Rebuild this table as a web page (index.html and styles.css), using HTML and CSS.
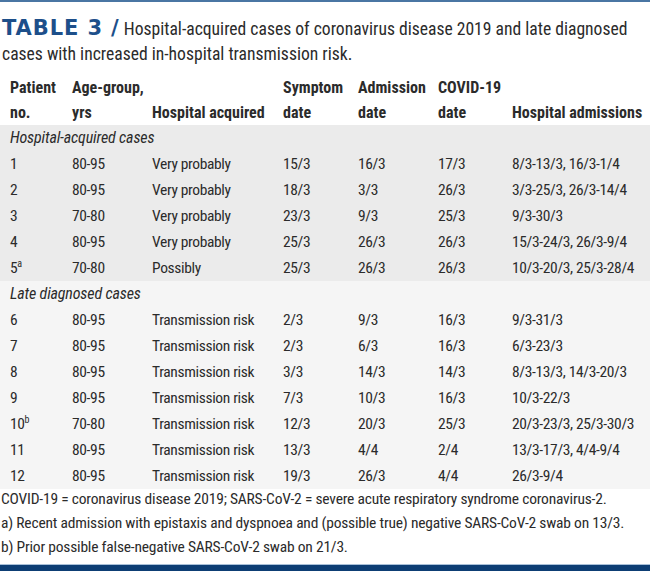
FILE: index.html
```html
<!DOCTYPE html>
<html lang="en">
<head>
<meta charset="utf-8">
<title>Table 3</title>
<link rel="stylesheet" href="styles.css">
</head>
<body>
<div class="page">
  <div class="topline"></div>
  <h1 class="title"><span class="label">TABLE 3 /</span> Hospital-acquired cases of coronavirus disease 2019 and late diagnosed cases with increased in-hospital transmission risk.</h1>
  <table class="data">
    <colgroup>
      <col class="c1"><col class="c2"><col class="c3"><col class="c4"><col class="c5"><col class="c6"><col class="c7">
    </colgroup>
    <thead>
      <tr><th>Patient<br>no.</th><th>Age-group,<br>yrs</th><th>Hospital acquired</th><th>Symptom<br>date</th><th>Admission<br>date</th><th>COVID-19<br>date</th><th>Hospital admissions</th></tr>
    </thead>
    <tbody class="band1">
      <tr class="section"><td colspan="7">Hospital-acquired cases</td></tr>
      <tr><td>1</td><td>80-95</td><td>Very probably</td><td>15/3</td><td>16/3</td><td>17/3</td><td>8/3-13/3, 16/3-1/4</td></tr>
      <tr><td>2</td><td>80-95</td><td>Very probably</td><td>18/3</td><td>3/3</td><td>26/3</td><td>3/3-25/3, 26/3-14/4</td></tr>
      <tr><td>3</td><td>70-80</td><td>Very probably</td><td>23/3</td><td>9/3</td><td>25/3</td><td>9/3-30/3</td></tr>
      <tr><td>4</td><td>80-95</td><td>Very probably</td><td>25/3</td><td>26/3</td><td>26/3</td><td>15/3-24/3, 26/3-9/4</td></tr>
      <tr><td>5<sup>a</sup></td><td>70-80</td><td>Possibly</td><td>25/3</td><td>26/3</td><td>26/3</td><td>10/3-20/3, 25/3-28/4</td></tr>
    </tbody>
    <tbody class="band2">
      <tr class="section"><td colspan="7">Late diagnosed cases</td></tr>
      <tr><td>6</td><td>80-95</td><td>Transmission risk</td><td>2/3</td><td>9/3</td><td>16/3</td><td>9/3-31/3</td></tr>
      <tr><td>7</td><td>80-95</td><td>Transmission risk</td><td>2/3</td><td>6/3</td><td>16/3</td><td>6/3-23/3</td></tr>
      <tr><td>8</td><td>80-95</td><td>Transmission risk</td><td>3/3</td><td>14/3</td><td>14/3</td><td>8/3-13/3, 14/3-20/3</td></tr>
      <tr><td>9</td><td>80-95</td><td>Transmission risk</td><td>7/3</td><td>10/3</td><td>16/3</td><td>10/3-22/3</td></tr>
      <tr><td>10<sup>b</sup></td><td>70-80</td><td>Transmission risk</td><td>12/3</td><td>20/3</td><td>25/3</td><td>20/3-23/3, 25/3-30/3</td></tr>
      <tr><td>11</td><td>80-95</td><td>Transmission risk</td><td>13/3</td><td>4/4</td><td>2/4</td><td>13/3-17/3, 4/4-9/4</td></tr>
      <tr><td>12</td><td>80-95</td><td>Transmission risk</td><td>19/3</td><td>26/3</td><td>4/4</td><td>26/3-9/4</td></tr>
    </tbody>
  </table>
  <div class="notes">
    <p>COVID-19 = coronavirus disease 2019; SARS-CoV-2 = severe acute respiratory syndrome coronavirus-2.</p>
    <p>a) Recent admission with epistaxis and dyspnoea and (possible true) negative SARS-CoV-2 swab on 13/3.</p>
    <p>b) Prior possible false-negative SARS-CoV-2 swab on 21/3.</p>
  </div>
  <div class="bottombar"></div>
</div>
</body>
</html>
```
FILE: styles.css
```css
html, body {
  margin: 0;
  padding: 0;
  background: #ffffff;
}
.page {
  width: 650px;
  height: 571px;
  display: flex;
  flex-direction: column;
  font-family: "Roboto Condensed", "Liberation Sans Narrow", "DejaVu Sans Condensed", "Roboto", sans-serif;
  font-stretch: condensed;
  color: #2b2b2b;
  font-size: 15.5px;
  overflow: hidden;
}
.topline {
  height: 2px;
  background: #4a76a3;
}
.title {
  margin: 15px 0 0 2px;
  font-size: 17.6px;
  font-weight: 400;
  line-height: 25px;
  color: #2b2b2b;
}
.label {
  font-family: "DejaVu Sans", sans-serif;
  font-stretch: normal;
  font-weight: 700;
  font-size: 21px;
  line-height: 18px;
  letter-spacing: 0.9px;
  color: #1d4f8a;
}
.data {
  margin-top: 8px;
  width: 650px;
  table-layout: fixed;
  border-collapse: collapse;
  border-spacing: 0;
}
.c1 { width: 62px; }
.c2 { width: 80px; }
.c3 { width: 131px; }
.c4 { width: 75px; }
.c5 { width: 80px; }
.c6 { width: 74px; }
.c7 { width: 148px; }
.data th, .data td {
  padding: 0 0 0 10px;
  text-align: left;
  white-space: nowrap;
  height: 26px;
  line-height: 26px;
}
.data td {
  letter-spacing: -0.35px;
}
.data th {
  font-size: 16px;
  font-weight: 700;
  line-height: 25px;
  vertical-align: bottom;
  color: #2b2b2b;
}
.band1 { background: #ebebeb; }
.band2 { background: #f5f5f5; }
.data .section td {
  font-style: italic;
  font-size: 16px;
  letter-spacing: -0.15px;
}
sup {
  font-size: 10px;
  line-height: 0;
  vertical-align: 6px;
  letter-spacing: 0;
}
.notes {
  margin: -2px 0 0 1px;
}
.notes p {
  margin: 0;
  line-height: 24px;
  font-size: 15.5px;
  letter-spacing: -0.2px;
  white-space: nowrap;
}
.bottombar {
  margin-top: auto;
  height: 6px;
  border-top: 1px solid #a9c0d8;
  background: #0d3e74;
}
```
